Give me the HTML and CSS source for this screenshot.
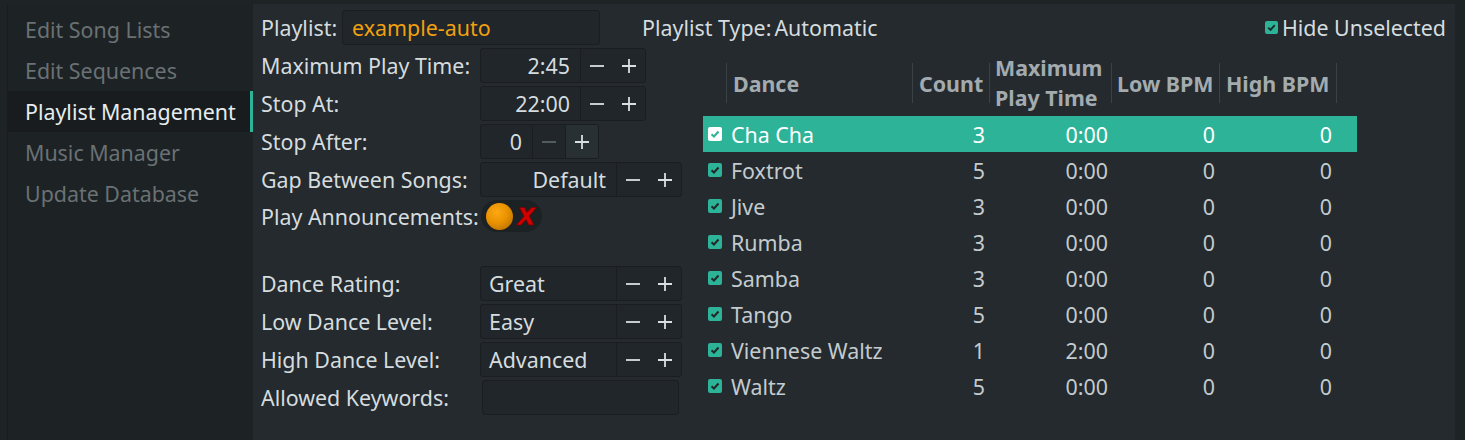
FILE: index.html
```html
<!DOCTYPE html>
<html>
<head>
<meta charset="utf-8">
<link rel="stylesheet" href="styles.css">
</head>
<body>
<div class="app">
  <nav class="sidebar">
    <div class="nav-item">Edit Song Lists</div>
    <div class="nav-item">Edit Sequences</div>
    <div class="nav-item active">Playlist Management</div>
    <div class="nav-item">Music Manager</div>
    <div class="nav-item">Update Database</div>
  </nav>
  <main class="main">
    <div class="topbar">
      <span class="lbl">Playlist:</span>
      <div class="name-input">example-auto</div>
      <span class="lbl type-lbl">Playlist Type:</span><span class="lbl type-val">Automatic</span>
      <label class="hide">
        <span class="cb"><svg viewBox="0 0 14 14" width="13" height="13"><path d="M3.5 7.2 L6 9.5 L10.5 4.5" fill="none" stroke="#1f2a2a" stroke-width="2"/></svg></span>
        <span>Hide Unselected</span>
      </label>
    </div>
    <div class="content">
      <div class="form">
        <div class="row">
          <span class="flabel">Maximum Play Time:</span>
          <div class="spin">
            <div class="val num w101">2:45</div>
            <div class="btns">
              <span class="btn"><svg viewBox="0 0 16 16" width="16" height="16"><path d="M1 8 H15" stroke="currentColor" stroke-width="1.8"/></svg></span>
              <span class="btn"><svg viewBox="0 0 16 16" width="16" height="16"><path d="M1 8 H15 M8 1 V15" stroke="currentColor" stroke-width="1.8"/></svg></span>
            </div>
          </div>
        </div>
        <div class="row">
          <span class="flabel">Stop At:</span>
          <div class="spin">
            <div class="val num w101">22:00</div>
            <div class="btns">
              <span class="btn"><svg viewBox="0 0 16 16" width="16" height="16"><path d="M1 8 H15" stroke="currentColor" stroke-width="1.8"/></svg></span>
              <span class="btn"><svg viewBox="0 0 16 16" width="16" height="16"><path d="M1 8 H15 M8 1 V15" stroke="currentColor" stroke-width="1.8"/></svg></span>
            </div>
          </div>
        </div>
        <div class="row">
          <span class="flabel">Stop After:</span>
          <div class="spin">
            <div class="val num w53">0</div>
            <div class="btns">
              <span class="btn disabled sep"><svg viewBox="0 0 16 16" width="16" height="16"><path d="M1 8 H15" stroke="currentColor" stroke-width="1.8"/></svg></span>
              <span class="btn hover sep"><svg viewBox="0 0 16 16" width="16" height="16"><path d="M1 8 H15 M8 1 V15" stroke="currentColor" stroke-width="1.8"/></svg></span>
            </div>
          </div>
        </div>
        <div class="row">
          <span class="flabel">Gap Between Songs:</span>
          <div class="spin">
            <div class="val num w137">Default</div>
            <div class="btns">
              <span class="btn"><svg viewBox="0 0 16 16" width="16" height="16"><path d="M1 8 H15" stroke="currentColor" stroke-width="1.8"/></svg></span>
              <span class="btn"><svg viewBox="0 0 16 16" width="16" height="16"><path d="M1 8 H15 M8 1 V15" stroke="currentColor" stroke-width="1.8"/></svg></span>
            </div>
          </div>
        </div>
        <div class="row toggle-row">
          <span class="flabel">Play Announcements:</span>
          <div class="toggle">
            <span class="ball"></span>
            <svg class="xmark" viewBox="0 0 22 22" width="22" height="22">
              <path d="M3.5 2.5 L8.4 2.5 L11 7.6 L15.6 2.5 L20.4 2.5 L13.3 11 L17.8 20 L12.8 20 L10 14.4 L5 20 L0.4 20 L8.1 11.3 Z" fill="#d00000" stroke="#7a0000" stroke-width="0.8" stroke-linejoin="round"/>
            </svg>
          </div>
        </div>
        <div class="row spacer-top">
          <span class="flabel">Dance Rating:</span>
          <div class="spin">
            <div class="val txt w137">Great</div>
            <div class="btns">
              <span class="btn"><svg viewBox="0 0 16 16" width="16" height="16"><path d="M1 8 H15" stroke="currentColor" stroke-width="1.8"/></svg></span>
              <span class="btn"><svg viewBox="0 0 16 16" width="16" height="16"><path d="M1 8 H15 M8 1 V15" stroke="currentColor" stroke-width="1.8"/></svg></span>
            </div>
          </div>
        </div>
        <div class="row">
          <span class="flabel">Low Dance Level:</span>
          <div class="spin">
            <div class="val txt w137">Easy</div>
            <div class="btns">
              <span class="btn"><svg viewBox="0 0 16 16" width="16" height="16"><path d="M1 8 H15" stroke="currentColor" stroke-width="1.8"/></svg></span>
              <span class="btn"><svg viewBox="0 0 16 16" width="16" height="16"><path d="M1 8 H15 M8 1 V15" stroke="currentColor" stroke-width="1.8"/></svg></span>
            </div>
          </div>
        </div>
        <div class="row">
          <span class="flabel">High Dance Level:</span>
          <div class="spin">
            <div class="val txt w137">Advanced</div>
            <div class="btns">
              <span class="btn"><svg viewBox="0 0 16 16" width="16" height="16"><path d="M1 8 H15" stroke="currentColor" stroke-width="1.8"/></svg></span>
              <span class="btn"><svg viewBox="0 0 16 16" width="16" height="16"><path d="M1 8 H15 M8 1 V15" stroke="currentColor" stroke-width="1.8"/></svg></span>
            </div>
          </div>
        </div>
        <div class="row">
          <span class="flabel">Allowed Keywords:</span>
          <div class="kw-input"></div>
        </div>
      </div>

      <div class="table">
        <div class="thead">
          <div class="th c-chk"></div>
          <div class="th c-dance div">Dance</div>
          <div class="th c-count div">Count</div>
          <div class="th c-max div two">Maximum<br>Play Time</div>
          <div class="th c-low div">Low BPM</div>
          <div class="th c-high div">High BPM</div>
          <div class="th c-rest div"></div>
        </div>
        <div class="tr selected">
          <div class="td c-chk"><span class="cb white"><svg viewBox="0 0 14 14" width="14" height="14"><path d="M3.5 7.2 L6 9.5 L10.5 4.5" fill="none" stroke="#2db398" stroke-width="2"/></svg></span></div>
          <div class="td c-dance">Cha Cha</div>
          <div class="td c-count r">3</div>
          <div class="td c-max r">0:00</div>
          <div class="td c-low r">0</div>
          <div class="td c-high r">0</div>
          <div class="td c-rest"></div>
        </div>
        <div class="tr">
          <div class="td c-chk"><span class="cb"><svg viewBox="0 0 14 14" width="14" height="14"><path d="M3.5 7.2 L6 9.5 L10.5 4.5" fill="none" stroke="#1f2a2a" stroke-width="2"/></svg></span></div>
          <div class="td c-dance">Foxtrot</div>
          <div class="td c-count r">5</div>
          <div class="td c-max r">0:00</div>
          <div class="td c-low r">0</div>
          <div class="td c-high r">0</div>
          <div class="td c-rest"></div>
        </div>
        <div class="tr">
          <div class="td c-chk"><span class="cb"><svg viewBox="0 0 14 14" width="14" height="14"><path d="M3.5 7.2 L6 9.5 L10.5 4.5" fill="none" stroke="#1f2a2a" stroke-width="2"/></svg></span></div>
          <div class="td c-dance">Jive</div>
          <div class="td c-count r">3</div>
          <div class="td c-max r">0:00</div>
          <div class="td c-low r">0</div>
          <div class="td c-high r">0</div>
          <div class="td c-rest"></div>
        </div>
        <div class="tr">
          <div class="td c-chk"><span class="cb"><svg viewBox="0 0 14 14" width="14" height="14"><path d="M3.5 7.2 L6 9.5 L10.5 4.5" fill="none" stroke="#1f2a2a" stroke-width="2"/></svg></span></div>
          <div class="td c-dance">Rumba</div>
          <div class="td c-count r">3</div>
          <div class="td c-max r">0:00</div>
          <div class="td c-low r">0</div>
          <div class="td c-high r">0</div>
          <div class="td c-rest"></div>
        </div>
        <div class="tr">
          <div class="td c-chk"><span class="cb"><svg viewBox="0 0 14 14" width="14" height="14"><path d="M3.5 7.2 L6 9.5 L10.5 4.5" fill="none" stroke="#1f2a2a" stroke-width="2"/></svg></span></div>
          <div class="td c-dance">Samba</div>
          <div class="td c-count r">3</div>
          <div class="td c-max r">0:00</div>
          <div class="td c-low r">0</div>
          <div class="td c-high r">0</div>
          <div class="td c-rest"></div>
        </div>
        <div class="tr">
          <div class="td c-chk"><span class="cb"><svg viewBox="0 0 14 14" width="14" height="14"><path d="M3.5 7.2 L6 9.5 L10.5 4.5" fill="none" stroke="#1f2a2a" stroke-width="2"/></svg></span></div>
          <div class="td c-dance">Tango</div>
          <div class="td c-count r">5</div>
          <div class="td c-max r">0:00</div>
          <div class="td c-low r">0</div>
          <div class="td c-high r">0</div>
          <div class="td c-rest"></div>
        </div>
        <div class="tr">
          <div class="td c-chk"><span class="cb"><svg viewBox="0 0 14 14" width="14" height="14"><path d="M3.5 7.2 L6 9.5 L10.5 4.5" fill="none" stroke="#1f2a2a" stroke-width="2"/></svg></span></div>
          <div class="td c-dance">Viennese Waltz</div>
          <div class="td c-count r">1</div>
          <div class="td c-max r">2:00</div>
          <div class="td c-low r">0</div>
          <div class="td c-high r">0</div>
          <div class="td c-rest"></div>
        </div>
        <div class="tr">
          <div class="td c-chk"><span class="cb"><svg viewBox="0 0 14 14" width="14" height="14"><path d="M3.5 7.2 L6 9.5 L10.5 4.5" fill="none" stroke="#1f2a2a" stroke-width="2"/></svg></span></div>
          <div class="td c-dance">Waltz</div>
          <div class="td c-count r">5</div>
          <div class="td c-max r">0:00</div>
          <div class="td c-low r">0</div>
          <div class="td c-high r">0</div>
          <div class="td c-rest"></div>
        </div>
      </div>
    </div>
  </main>
</div>
</body>
</html>
```

FILE: styles.css
```css
* { box-sizing: border-box; }
html, body {
  margin: 0;
  padding: 0;
  background: #1e2326;
  width: 1465px;
  height: 440px;
  overflow: hidden;
  font-family: "Noto Sans", "Open Sans", sans-serif;
  font-size: 21.4px;
  color: #d5dcdf;
}
.app {
  display: flex;
  height: 440px;
  padding: 4px 10px 0 7px;
}
.sidebar {
  width: 246px;
  flex: none;
  background: #1d2225;
  border-left: 1px solid #191d20;
  padding-top: 5px;
}
.nav-item {
  height: 41px;
  line-height: 41px;
  padding-left: 17px;
  color: #6a7174;
  white-space: nowrap;
}
.nav-item.active {
  background: #181c1e;
  color: #e6ecee;
  border-right: 3px solid #2db398;
}
.main {
  flex: 1;
  background: #242a2e;
  padding: 6px 9px 0 8px;
}
.topbar {
  display: flex;
  align-items: center;
  height: 35px;
}
.lbl { white-space: nowrap; }
.name-input {
  margin-left: 5px;
  width: 258px;
  height: 35px;
  line-height: 33px;
  padding-left: 9px;
  background: #20262a;
  border: 1px solid #1a1e21;
  border-radius: 3px;
  color: #f0a010;
}
.type-lbl { margin-left: 42px; }
.type-val { margin-left: 3px; }
.hide {
  margin-left: auto;
  display: flex;
  align-items: center;
  gap: 4px;
}
.hide .cb { width: 13px; height: 13px; }
.cb {
  display: inline-flex;
  width: 14px;
  height: 14px;
  border-radius: 2px;
  background: #2db398;
  align-items: center;
  justify-content: center;
}
.cb.white { background: #ffffff; }
.cb svg { display: block; }

.content {
  display: flex;
  gap: 21px;
  margin-top: 3px;
}
.form { width: 421px; flex: none; }
.row {
  display: flex;
  align-items: center;
  height: 35px;
  margin-bottom: 3px;
}
.flabel {
  width: 219px;
  flex: none;
  white-space: nowrap;
}
.spin {
  display: flex;
  height: 35px;
  border: 1px solid #1a1e21;
  border-radius: 3px;
  background: #20262a;
}
.val {
  height: 33px;
  line-height: 33px;
  border-right: 1px solid #1a1e21;
  white-space: nowrap;
}
.val.num { text-align: right; padding-right: 10px; }
.val.txt { text-align: left; padding-left: 8px; }
.w101 { width: 100px; }
.w53 { width: 52px; }
.w137 { width: 136px; }
.btns { display: flex; }
.btn {
  display: flex;
  align-items: center;
  justify-content: center;
  width: 32px;
  height: 33px;
  color: #d8dfe2;
}
.btn svg { display: block; }
.btn.sep { border-right: 1px solid #1a1e21; }
.btn.sep:last-child { border-right: 0; }
.btn.disabled { color: #596164; width: 33px; }
.btn.hover { background: #283034; border-radius: 0 2px 2px 0; }
.toggle-row { height: 32px; }
.toggle {
  display: flex;
  align-items: center;
  width: 61px;
  height: 32px;
  margin-left: 1px;
  border-radius: 16px;
  background: #1c2124;
  padding-left: 5px;
  gap: 3px;
}
.ball {
  width: 27px;
  height: 27px;
  flex: none;
  border-radius: 50%;
  background: radial-gradient(circle at 40% 35%, #ffa814 0%, #e89200 45%, #a86400 100%);
  box-shadow: 0 0 1px #5a3a00;
}
.xmark { display: block; }
.spacer-top { margin-top: 34px; }
.kw-input {
  margin-left: 2px;
  width: 197px;
  height: 35px;
  border: 1px solid #1a1e21;
  border-radius: 3px;
  background: #20262a;
}

.table { width: 654px; flex: none; }
.thead {
  display: flex;
  height: 52px;
  margin-top: 9px;
  margin-bottom: 7px;
  font-weight: 700;
  color: #a3abae;
}
.th {
  position: relative;
  display: flex;
  align-items: center;
  padding-left: 7px;
  white-space: nowrap;
}
.th.div::before {
  content: "";
  position: absolute;
  left: 0;
  top: 6px;
  bottom: 6px;
  width: 1px;
  background: #3a4246;
}
.th.two { line-height: 30px; padding-left: 6px; }
.c-chk { width: 23px; flex: none; }
.c-dance { width: 186px; flex: none; }
.c-count { width: 77px; flex: none; }
.c-max { width: 122px; flex: none; }
.c-low { width: 108px; flex: none; }
.c-high { width: 117px; flex: none; }
.c-rest { width: 21px; flex: none; }
.th.c-low { padding-left: 6px; }
.th.c-high { padding-left: 7px; }
.tr {
  display: flex;
  height: 36px;
  align-items: center;
  color: #c3cbce;
}
.tr.selected { background: #2db398; color: #ffffff; }
.td { white-space: nowrap; }
.td.c-chk { display: flex; padding-left: 5px; }
.td.c-dance { padding-left: 5px; }
.td.r { text-align: right; padding-right: 4px; }
.td.c-max { padding-right: 3px; }
```
